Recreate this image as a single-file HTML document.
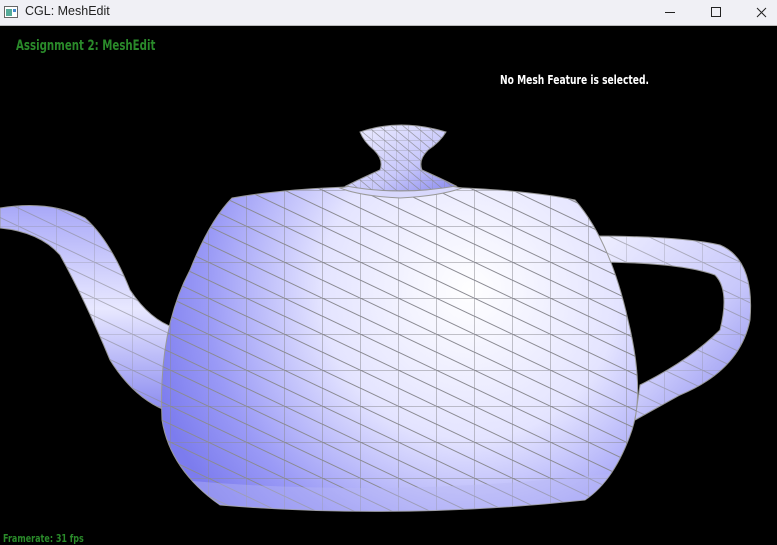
<!DOCTYPE html>
<html><head><meta charset="utf-8"><style>
body{margin:0;width:777px;height:544px;overflow:hidden;background:#000;font-family:"Liberation Sans",sans-serif}
#tb{position:absolute;left:0;top:0;width:777px;height:25px;background:#f0f0f5;border-bottom:1px solid #bbb}
#tb .t{position:absolute;left:25px;top:4px;font-size:12.5px;color:#222}
.g{position:absolute;color:#2a8a2a;font-weight:bold;font-family:"DejaVu Sans","Liberation Sans",sans-serif;transform-origin:0 0;white-space:nowrap}
</style></head><body>
<div id="tb"><svg style="position:absolute;left:4px;top:6px" width="14" height="12"><rect x="0.5" y="0.5" width="13" height="11" fill="#fff" stroke="#666"/><rect x="2" y="3" width="6" height="7" fill="#5a9"/><rect x="9" y="3" width="3" height="3" fill="#48c"/></svg><span class="t">CGL: MeshEdit</span>
<svg style="position:absolute;left:660px;top:0" width="117" height="25"><line x1="5" y1="12.5" x2="15" y2="12.5" stroke="#222"/><rect x="51.5" y="7.5" width="9" height="9" fill="none" stroke="#222"/><path d="M97 8l9 9M106 8l-9 9" stroke="#222"/></svg></div>
<div class="g" style="left:16px;top:38px;font-size:14px;transform:scaleX(0.73)">Assignment 2: MeshEdit</div>
<div class="g" style="left:500px;top:73px;font-size:12px;color:#fff;transform:scaleX(0.76)">No Mesh Feature is selected.</div>
<div class="g" style="left:3px;top:532px;font-size:11px;transform:scaleX(0.73)">Framerate: 31 fps</div>
<svg style="position:absolute;left:0;top:0" width="777" height="544">
<defs>
<radialGradient id="bg" cx="470" cy="290" r="330" gradientUnits="userSpaceOnUse">
<stop offset="0" stop-color="#ffffff"/><stop offset="0.45" stop-color="#e4e4ff"/><stop offset="0.8" stop-color="#9a9af6"/><stop offset="1" stop-color="#7c7cee"/></radialGradient>
<linearGradient id="sp" x1="0" y1="0" x2="0" y2="1"><stop offset="0" stop-color="#a8a8f8"/><stop offset="0.5" stop-color="#e8e8ff"/><stop offset="1" stop-color="#8a8af0"/></linearGradient>
<linearGradient id="hd" x1="0" y1="0" x2="1" y2="1"><stop offset="0" stop-color="#f0f0ff"/><stop offset="0.6" stop-color="#c8c8fb"/><stop offset="1" stop-color="#8888ee"/></linearGradient>
<clipPath id="bc"><path id="body" d="M232 198 Q300 186 400 186 Q520 188 575 200 Q610 240 628 320 Q645 390 632 430 Q615 480 585 500 Q400 520 220 505 Q170 470 162 420 Q158 330 190 270 Q210 220 232 198Z"/></clipPath>
<pattern id="mesh" width="38" height="36" patternUnits="userSpaceOnUse" x="170" y="190"><path d="M0 0H38M0 0V36M0 0L38 18M0 18L38 36" stroke="#8a8a92" stroke-width="1" fill="none"/></pattern>
<pattern id="mesh2" width="12" height="10" patternUnits="userSpaceOnUse"><path d="M0 0H12M0 0V10M0 0L12 10" stroke="#8a8a92" stroke-width="0.8" fill="none"/></pattern>
</defs>
<path d="M0 208 Q50 200 85 218 Q110 240 130 290 Q150 320 175 328 L170 412 Q135 400 110 360 Q85 300 60 255 Q40 232 0 228Z" fill="url(#sp)" stroke="#999"/>
<path d="M590 236 Q680 236 720 245 Q755 260 750 320 Q740 370 680 395 L635 420 L640 385 Q690 360 720 330 Q730 290 715 275 Q680 262 590 262Z" fill="url(#hd)" stroke="#999"/>
<path d="M0 208 Q50 200 85 218 Q110 240 130 290 Q150 320 175 328 L170 412 Q135 400 110 360 Q85 300 60 255 Q40 232 0 228Z" fill="url(#mesh)" opacity="0.6"/>
<path d="M590 236 Q680 236 720 245 Q755 260 750 320 Q740 370 680 395 L635 420 L640 385 Q690 360 720 330 Q730 290 715 275 Q680 262 590 262Z" fill="url(#mesh)" opacity="0.6"/>
<use href="#body" fill="url(#bg)" stroke="#999"/>
<g clip-path="url(#bc)">
<rect x="150" y="180" width="500" height="340" fill="url(#mesh)"/>
<path d="M180 480 Q400 500 640 470 L640 520 L160 520Z" fill="#b8b8f5" opacity="0.4"/>
</g>
<path d="M340 188 Q400 176 462 188 Q440 196 400 198 Q360 196 340 188Z" fill="#d8d8fc" stroke="#999"/>
<path d="M360 132 Q400 118 446 132 Q440 142 428 150 Q418 160 422 170 Q440 178 456 186 Q400 196 346 186 Q362 178 380 170 Q384 160 374 150 Q364 142 360 132Z" fill="url(#hd)" stroke="#999"/>
<path d="M360 132 Q400 118 446 132 Q440 142 428 150 Q418 160 422 170 Q440 178 456 186 Q400 196 346 186 Q362 178 380 170 Q384 160 374 150 Q364 142 360 132Z" fill="url(#mesh2)" opacity="0.8"/>
</svg>
</body></html>
